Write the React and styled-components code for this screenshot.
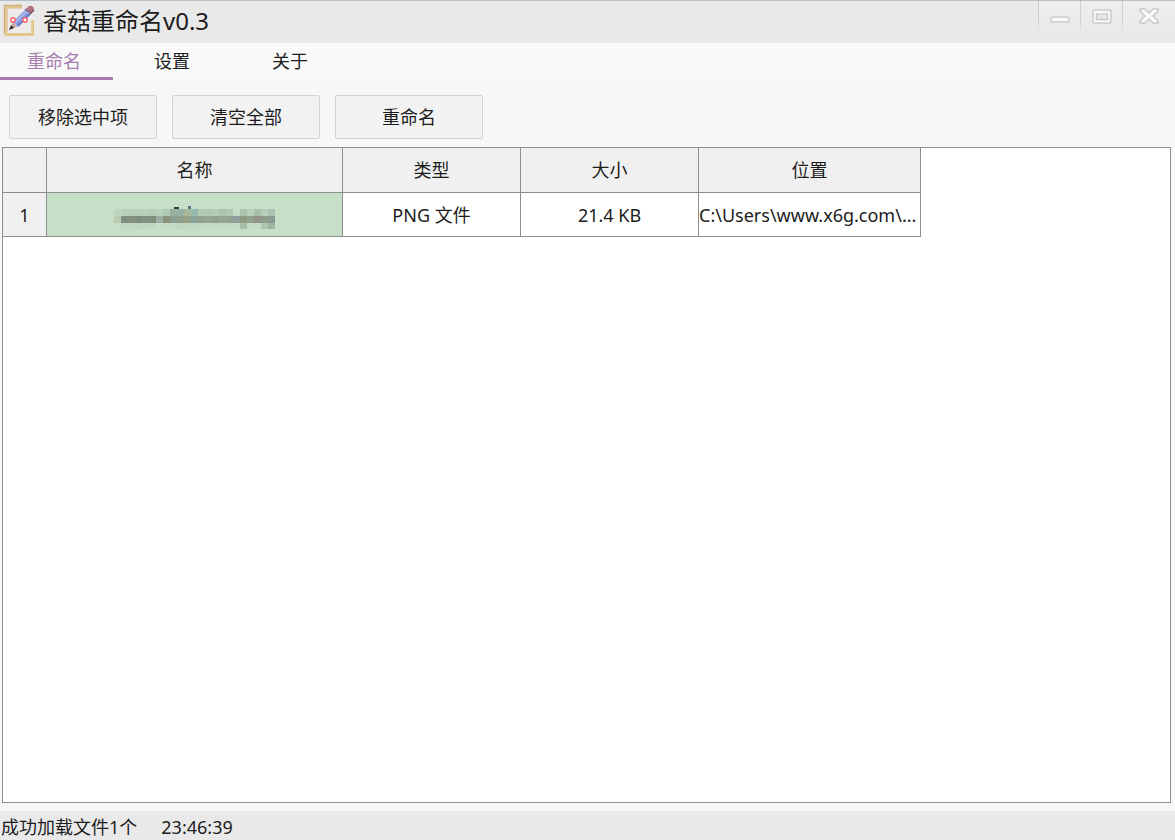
import { useState } from "react";
import styled, { createGlobalStyle } from "styled-components";

const GlobalStyle = createGlobalStyle`
  * {
    box-sizing: border-box;
  }

  body {
    margin: 0;
    background-color: #f7f7f7;
    color: #1c1c1c;
    font-family: "Noto Sans", "Noto Sans CJK SC", sans-serif;
    font-size: 18px;
    line-height: 24px;
  }

  button {
    font: inherit;
    color: inherit;
    padding: 0;
  }
`;

const Window = styled.div`
  display: flex;
  flex-direction: column;
  height: 100vh;
`;

const TitleBar = styled.header`
  display: flex;
  align-items: flex-start;
  height: 43px;
  flex: none;
  padding-left: 3px;
  background-color: #e9e9e9;
  border-top: 1px solid #b4bec7;
`;

const AppIcon = styled.svg`
  width: 34px;
  height: 34px;
  margin-top: 3px;
`;

const Title = styled.h1`
  flex: 1;
  margin: 0 0 0 6px;
  font-size: 24px;
  font-weight: 400;
  line-height: 40px;
`;

const WindowButton = styled.button`
  width: ${({ $wide }) => ($wide ? "53px" : "42px")};
  height: 30px;
  border: 0;
  border-left: 1px solid;
  border-image: linear-gradient(#cfcfcf 60%, #e9e9e9) 1;
  background: linear-gradient(#eeeeee, #e9e9e9);

  svg {
    display: block;
    margin: 0 auto;
  }
`;

const Tabs = styled.nav`
  display: flex;
  flex: none;
  height: 37px;
  margin-left: -5px;
  background-color: #f9f9f9;
`;

const Tab = styled.button`
  width: 118px;
  padding-top: 2px;
  border: 0;
  border-bottom: 3px solid ${({ $active }) => ($active ? "#a47bab" : "transparent")};
  background: none;
  color: ${({ $active }) => ($active ? "#a67dae" : "#1c1c1c")};
`;

const Toolbar = styled.div`
  display: flex;
  flex: none;
  gap: 15px;
  padding: 15px 9px 8px;
`;

const ToolButton = styled.button`
  width: 148px;
  height: 44px;
  border: 1px solid #d3d3d3;
  border-radius: 2px;
  background-color: #f2f2f2;
`;

const FilePanel = styled.main`
  flex: 1;
  min-height: 0;
  overflow: hidden;
  margin: 0 4px 8px 2px;
  border: 1px solid #8e8e8e;
  background-color: #fff;
`;

const FileTable = styled.table`
  table-layout: fixed;
  width: 918px;
  border-collapse: separate;
  border-spacing: 0;

  thead tr {
    height: 45px;
  }
`;

const cellBorders = `
  height: 44px;
  padding: 0;
  border-right: 1px solid #8e8e8e;
  border-bottom: 1px solid #8e8e8e;
  font-weight: 400;
`;

const HeadCell = styled.th`
  ${cellBorders}
  width: ${({ $width }) => ($width ? `${$width}px` : "auto")};
  background-color: #f0f0f0;
`;

const Cell = styled.td`
  ${cellBorders}
  background-color: ${({ $selected }) => ($selected ? "#c7dfc7" : "#fff")};
  text-align: ${({ $align = "center" }) => $align};
  white-space: nowrap;

  svg {
    display: block;
    margin: 0 auto;
  }
`;

const StatusBar = styled.footer`
  display: flex;
  flex: none;
  gap: 24px;
  align-items: center;
  height: 29px;
  padding: 2px 1px 0;
  background-color: #e9e9e9;
`;

// Mosaic drawn over the private file name, one colour for each block
const MOSAIC = [
  ["#bfd6bd", "#b6d0b9", "#b4ceb8", "#b5cfb8", "#b8d2ba", "#b4ceb7", "#b7d1ba", "#b0cbb3", "#96af9e", "#98b3a5", "#abb79b", "#98b9b1", "#b3cbb3", "#b0c9b3", "#b4ccb5", "#abc3af", "#afc9b3", "#c4dcc4", "#acc2ab", "#b8d0b8", "#a9bfac", "#b7cfb9", "#a9c2b1"],
  ["#bccdb1", "#7f8f7f", "#84917f", "#7d8c7c", "#839080", "#7f8f7e", "#9bb0a4", "#8c917b", "#8a9e91", "#909f87", "#96a085", "#8aa39b", "#93a390", "#95a693", "#8fa18f", "#97a792", "#91a592", "#939f9c", "#8d9b82", "#92a28d", "#938f89", "#8c9c8c", "#889d91"],
  ["#c7dfc7", "#c0d8c1", "#c1d9c2", "#c0d8c1", "#c1d9c2", "#c0d8c1", "#c5ddc5", "#c3dbc3", "#c2dac2", "#c0d8c0", "#c1d9c1", "#c1d9c2", "#c4dcc4", "#c3dbc3", "#c3dbc3", "#c4dcc4", "#c3dbc3", "#c5ddc5", "#a9bea8", "#c4dcc4", "#c5ddc5", "#b0c5ae", "#9fb6a5"],
];

const HiddenName = () => (
  <svg width="161" height="28" shapeRendering="crispEdges" aria-hidden="true">
    {MOSAIC.map((row, y) =>
      row.map((fill, x) => (
        <rect key={`${x}-${y}`} x={x * 7} y={8 + y * 7} width="7" height={y === 2 ? 6 : 7} fill={fill} />
      ))
    )}
    <path d="M60 6h5v2h-5z" fill="#343c37" />
    <path d="M74 5h3v3h-3z" fill="#4f7580" />
  </svg>
);

const PencilIcon = () => (
  <AppIcon viewBox="0 0 34 34" aria-hidden="true">
    <path d="M3 3h26v27H3z" fill="#eeebea" />
    <path d="M19 2.5H2.5v28h27V16" fill="none" stroke="#e3cd98" strokeWidth="3" />
    <path d="M19 1.5H1.5v28" fill="none" stroke="#cfae78" strokeWidth="1.5" />
    <path d="M4 28V4h15" fill="none" stroke="#d9b884" strokeWidth="1" />
    <path d="M30.5 16v14.5H3" fill="none" stroke="#dcc078" strokeWidth="1" />
    <path d="m10 18 12-12 5 5-12 12z" fill="#8094dc" />
    <path d="m12 19 12-12" stroke="#a9b9ee" strokeWidth="2" />
    <path d="m15 22 12-12" stroke="#6470b8" strokeWidth="1.5" />
    <path d="m10 18-3 7 7-2z" fill="#c9a394" />
    <path d="m8 21-2 5 5-2z" fill="#252a35" />
    <path d="m23 5 3-3q4-1 5 3l-3 5z" fill="#b3707a" />
    <path d="m27 10 4-4" stroke="#7e4c5c" strokeWidth="1.5" />
    <path d="m22 5 6 5" stroke="#65688a" strokeWidth="1.5" />
    <circle cx="10" cy="16" r="2.2" fill="#fff" stroke="#f8626a" strokeWidth="1.5" />
    <circle cx="22" cy="16" r="2.2" fill="#fff" stroke="#f8626a" strokeWidth="1.5" />
  </AppIcon>
);

const MinimizeIcon = () => (
  <svg width="20" height="20" aria-hidden="true">
    <rect x="1" y="11" width="18" height="5" rx="1.5" fill="#fafafa" stroke="#cbcbcb" strokeWidth="1.5" />
  </svg>
);

const MaximizeIcon = () => (
  <svg width="20" height="20" aria-hidden="true">
    <rect x="1" y="4" width="18" height="13" rx="1" fill="#f8f8f8" stroke="#cbcbcb" strokeWidth="1.5" />
    <rect x="4.5" y="8" width="11" height="5.5" fill="#e8e8e8" stroke="#cbcbcb" strokeWidth="1.5" />
  </svg>
);

const CloseIcon = () => (
  <svg width="20" height="20" aria-hidden="true">
    <path
      d="M1 3h5l4 4 4-4h5v2l-5 5 5 5v2h-5l-4-4-4 4H1v-2l5-5-5-5z"
      fill="#f9f9f9"
      stroke="#c8c8c8"
      strokeWidth="1.5"
      strokeLinejoin="round"
    />
  </svg>
);

const TABS = ["重命名", "设置", "关于"];
const ACTIONS = ["移除选中项", "清空全部", "重命名"];
const COLUMNS = [
  { label: "名称", width: 296 },
  { label: "类型", width: 178 },
  { label: "大小", width: 178 },
  { label: "位置", width: 222 },
];

const App = () => {
  const [activeTab, setActiveTab] = useState(0);

  return (
    <Window>
      <GlobalStyle />
      <TitleBar>
        <PencilIcon />
        <Title>香菇重命名v0.3</Title>
        <WindowButton aria-label="最小化">
          <MinimizeIcon />
        </WindowButton>
        <WindowButton aria-label="最大化">
          <MaximizeIcon />
        </WindowButton>
        <WindowButton $wide aria-label="关闭">
          <CloseIcon />
        </WindowButton>
      </TitleBar>
      <Tabs>
        {TABS.map((label, index) => (
          <Tab key={label} $active={index === activeTab} onClick={() => setActiveTab(index)}>
            {label}
          </Tab>
        ))}
      </Tabs>
      <Toolbar>
        {ACTIONS.map((label) => (
          <ToolButton key={label}>{label}</ToolButton>
        ))}
      </Toolbar>
      <FilePanel>
        <FileTable>
          <thead>
            <tr>
              <HeadCell $width={44} />
              {COLUMNS.map(({ label, width }) => (
                <HeadCell key={label} $width={width} scope="col">
                  {label}
                </HeadCell>
              ))}
            </tr>
          </thead>
          <tbody>
            <tr>
              <HeadCell scope="row">1</HeadCell>
              <Cell $selected>
                <HiddenName />
              </Cell>
              <Cell>PNG 文件</Cell>
              <Cell>21.4 KB</Cell>
              <Cell $align="left">C:\Users\www.x6g.com\...</Cell>
            </tr>
          </tbody>
        </FileTable>
      </FilePanel>
      <StatusBar>
        <span>成功加载文件1个</span>
        <span>23:46:39</span>
      </StatusBar>
    </Window>
  );
};

export default App;
